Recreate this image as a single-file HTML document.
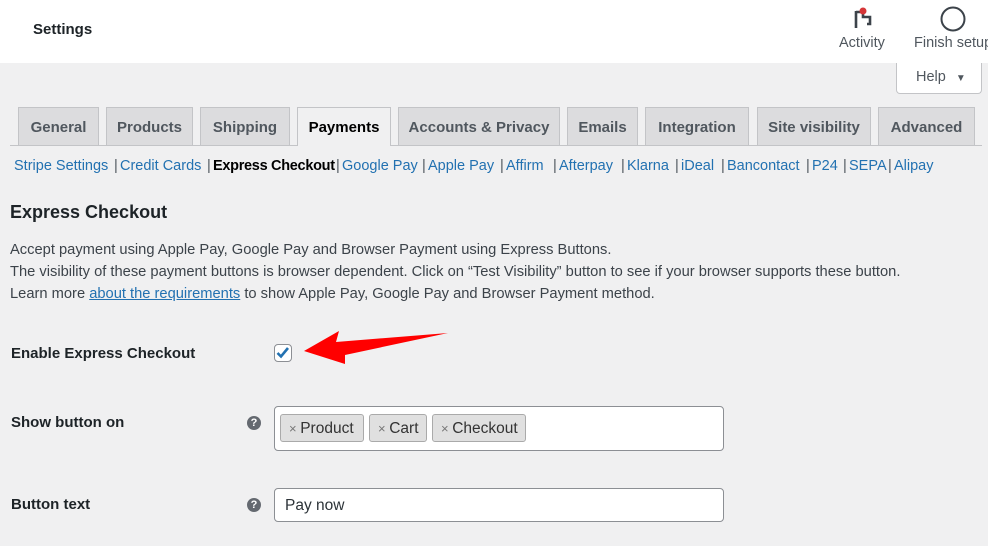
<!DOCTYPE html>
<html><head><meta charset="utf-8"><style>
*{margin:0;padding:0;box-sizing:border-box}
body{width:988px;height:546px;overflow:hidden;background:#f0f0f1;font-family:"Liberation Sans",sans-serif;color:#1d2327;position:relative}
.top{position:absolute;left:0;top:0;width:988px;height:63px;background:#fff}
.a{position:absolute;white-space:nowrap}
.tab{position:absolute;top:107px;height:38px;background:#dcdcde;border:1px solid #c3c4c7;border-bottom:none;font-size:15px;font-weight:bold;color:#50575e;text-align:center;line-height:39px}
.tab.on{background:#f0f0f1;color:#000;height:39px}
.l{position:absolute;top:158px;font-size:14.5px;color:#2271b1;white-space:nowrap}
.sep{position:absolute;top:158px;font-size:14.5px;color:#50575e}
.p{font-size:14.7px;color:#3c434a}
.lab{font-size:15px;font-weight:bold;color:#1d2327}
.tag{position:absolute;top:414px;height:28px;background:#e0e0e0;border:1px solid #aaa;border-radius:3px;font-size:15.5px;line-height:28px;color:#333;padding-left:8px}
.q{position:absolute;width:14px;height:14px;border-radius:50%;background:#646970;color:#fff;font-size:11px;font-weight:bold;text-align:center;line-height:14px}
</style></head><body>
<div class="top"></div>
<div class="a" style="left:33px;top:21px;font-size:15px;font-weight:bold;color:#1d2327">Settings</div>
<svg class="a" style="left:852px;top:5px" width="24" height="26" viewBox="0 0 24 26"><path d="M4 6v17M4 7h7v5h7v7h-3" fill="none" stroke="#3c434a" stroke-width="2.6"/><circle cx="11" cy="6" r="3.5" fill="#d63638"/></svg>
<div class="a" style="left:839px;top:35px;font-size:14.5px;color:#50575e">Activity</div>
<svg class="a" style="left:939px;top:5px" width="28" height="28"><circle cx="14" cy="14" r="11.5" fill="none" stroke="#3c434a" stroke-width="2"/></svg>
<div class="a" style="left:914px;top:35px;font-size:14.5px;color:#50575e">Finish setup</div>
<div class="a" style="left:896px;top:63px;width:86px;height:31px;background:#fff;border:1px solid #c3c4c7;border-top:none;border-radius:0 0 4px 4px;font-size:14.5px;color:#50575e;line-height:29px;padding-left:19px">Help <span style="font-size:10px;margin-left:6px">▼</span></div>
<div class="a" style="left:10px;top:145px;width:972px;height:1px;background:#c3c4c7"></div>
<div class="tab" style="left:18px;width:81px">General</div>
<div class="tab" style="left:106px;width:87px">Products</div>
<div class="tab" style="left:200px;width:90px">Shipping</div>
<div class="tab on" style="left:297px;width:94px">Payments</div>
<div class="tab" style="left:398px;width:162px">Accounts &amp; Privacy</div>
<div class="tab" style="left:567px;width:71px">Emails</div>
<div class="tab" style="left:645px;width:104px">Integration</div>
<div class="tab" style="left:757px;width:114px">Site visibility</div>
<div class="tab" style="left:878px;width:97px">Advanced</div>
<div class="l" style="left:14px">Stripe Settings</div>
<div class="sep" style="left:114px">|</div><div class="l" style="left:120px">Credit Cards</div>
<div class="sep" style="left:207px">|</div><div class="l" style="left:213px;color:#000;font-weight:bold;font-size:14.5px;top:158px;letter-spacing:-0.3px">Express Checkout</div>
<div class="sep" style="left:336px">|</div><div class="l" style="left:342px">Google Pay</div>
<div class="sep" style="left:422px">|</div><div class="l" style="left:428px">Apple Pay</div>
<div class="sep" style="left:500px">|</div><div class="l" style="left:506px">Affirm</div>
<div class="sep" style="left:553px">|</div><div class="l" style="left:559px">Afterpay</div>
<div class="sep" style="left:621px">|</div><div class="l" style="left:627px">Klarna</div>
<div class="sep" style="left:675px">|</div><div class="l" style="left:681px">iDeal</div>
<div class="sep" style="left:721px">|</div><div class="l" style="left:727px">Bancontact</div>
<div class="sep" style="left:806px">|</div><div class="l" style="left:812px">P24</div>
<div class="sep" style="left:843px">|</div><div class="l" style="left:849px">SEPA</div>
<div class="sep" style="left:888px">|</div><div class="l" style="left:894px">Alipay</div>
<div class="a" style="left:10px;top:202px;font-size:18px;font-weight:bold;color:#1d2327">Express Checkout</div>
<div class="a p" style="left:10px;top:242px">Accept payment using Apple Pay, Google Pay and Browser Payment using Express Buttons.</div>
<div class="a p" style="left:10px;top:264px">The visibility of these payment buttons is browser dependent. Click on “Test Visibility” button to see if your browser supports these button.</div>
<div class="a p" style="left:10px;top:286px">Learn more <span style="color:#2271b1;text-decoration:underline">about the requirements</span> to show Apple Pay, Google Pay and Browser Payment method.</div>
<div class="a lab" style="left:11px;top:345px">Enable Express Checkout</div>
<div class="a" style="left:274px;top:344px;width:18px;height:18px;border:1px solid #8c8f94;border-radius:4px;background:#fff"></div>
<svg class="a" style="left:274px;top:344px" width="18" height="18"><path d="M3.5 9l3.5 3.5 7-8.5" fill="none" stroke="#2271b1" stroke-width="2.6"/></svg>
<svg class="a" style="left:0;top:0" width="988" height="546"><polygon points="304,351 339,331 336,342 448,333 345,355 345,364" fill="#f00"/></svg>
<div class="a lab" style="left:11px;top:414px">Show button on</div>
<div class="q" style="left:247px;top:416px">?</div>
<div class="a" style="left:274px;top:406px;width:450px;height:45px;background:#fff;border:1px solid #8c8f94;border-radius:4px"></div>
<div class="tag" style="left:280px;width:84px"><span style="color:#777;font-size:13px">× </span>Product</div>
<div class="tag" style="left:369px;width:58px"><span style="color:#777;font-size:13px">× </span>Cart</div>
<div class="tag" style="left:432px;width:94px"><span style="color:#777;font-size:13px">× </span>Checkout</div>
<div class="a lab" style="left:11px;top:496px">Button text</div>
<div class="q" style="left:247px;top:498px">?</div>
<div class="a" style="left:274px;top:488px;width:450px;height:34px;background:#fff;border:1px solid #8c8f94;border-radius:4px;font-size:15.5px;line-height:34px;padding-left:10px;color:#2c3338">Pay now</div>
</body></html>
